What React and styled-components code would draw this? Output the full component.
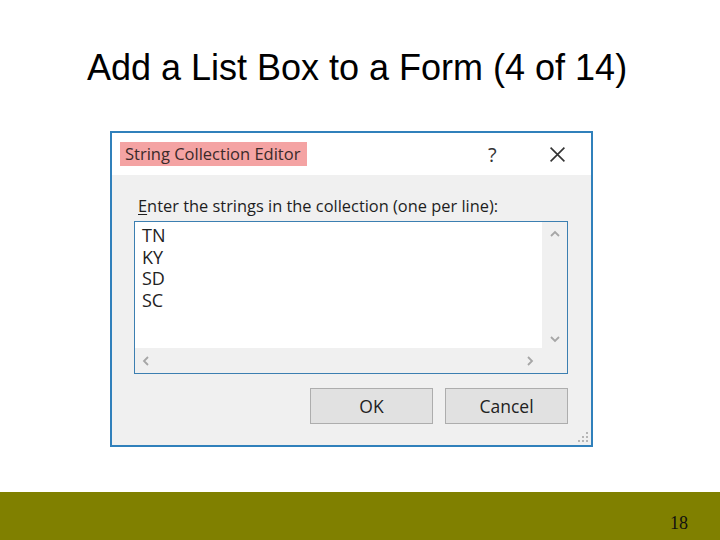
import React from "react";
import styled, { createGlobalStyle } from "styled-components";

const GlobalStyle = createGlobalStyle`
  html, body {
    margin: 0;
    padding: 0;
    background: #ffffff;
  }
  #root {
    width: 720px;
    height: 540px;
  }
`;

const Slide = styled.div`
  width: 720px;
  height: 540px;
  display: flex;
  flex-direction: column;
  background: #ffffff;
  overflow: hidden;
`;

const Heading = styled.h1`
  margin: 0;
  height: 131px;
  padding: 47px 6px 0 0;
  box-sizing: border-box;
  text-align: center;
  font-family: "Liberation Sans", Arial, sans-serif;
  font-size: 36px;
  font-weight: 400;
  line-height: 41px;
  color: #000;
`;

const Dialog = styled.div`
  margin-left: 110px;
  width: 483px;
  height: 316px;
  box-sizing: border-box;
  border: 2px solid #3080bb;
  display: flex;
  flex-direction: column;
  font-family: "Open Sans", "Noto Sans", sans-serif;
  color: #1a1a1a;
`;

const TitleBar = styled.div`
  height: 42px;
  background: #ffffff;
  display: flex;
  align-items: center;
  padding: 0 0 0 8px;
`;

const TitleText = styled.span`
  background: #f4a3a3;
  height: 24px;
  line-height: 24px;
  padding: 0 7px 0 5px;
  font-size: 16.5px;
  color: #3b2a2a;
`;

const TitleButton = styled.span`
  width: ${({ w }) => w}px;
  margin-left: ${({ gap }) => gap}px;
  display: flex;
  align-items: center;
  justify-content: center;
  color: #333;
  font-size: 20px;
`;

const Body = styled.div`
  flex: 1;
  background: #f0f0f0;
  position: relative;
  padding: 20px 23px 0 22px;
  display: flex;
  flex-direction: column;
`;

const Label = styled.div`
  font-size: 16.4px;
  line-height: 21px;
  margin-left: 4px;
  color: #1e1e1e;
  white-space: nowrap;
  u {
    text-decoration: underline;
    text-underline-offset: 2px;
  }
`;

const TextBox = styled.div`
  margin-top: 5px;
  width: 434px;
  height: 153px;
  box-sizing: border-box;
  border: 1px solid #3c7fb1;
  display: grid;
  grid-template-columns: 1fr 25px;
  grid-template-rows: 1fr 25px;
  background: #f0f0f0;
`;

const Lines = styled.div`
  background: #ffffff;
  padding: 3px 0 0 7px;
  font-size: 18px;
  line-height: 21.7px;
  color: #222;
`;

const ScrollV = styled.div`
  display: flex;
  flex-direction: column;
  justify-content: space-between;
  align-items: center;
  padding: 8px 0 5px;
`;

const ScrollH = styled.div`
  display: flex;
  justify-content: space-between;
  align-items: center;
  padding: 0 8px 0 7px;
`;

const Buttons = styled.div`
  margin-top: 14px;
  width: 434px;
  display: flex;
  justify-content: flex-end;
  gap: 12px;
`;

const Button = styled.div`
  width: 123px;
  height: 36px;
  box-sizing: border-box;
  background: #e1e1e1;
  border: 1px solid #adadad;
  display: flex;
  align-items: center;
  justify-content: center;
  font-size: 17.5px;
  color: #222;
`;

const Grip = styled.svg`
  position: absolute;
  right: 3px;
  bottom: 3px;
`;

const Footer = styled.div`
  margin-top: auto;
  height: 48px;
  background: #808000;
  display: flex;
  justify-content: flex-end;
  align-items: flex-start;
  padding: 22px 32px 0 0;
  box-sizing: border-box;
  font-family: "Liberation Serif", "Times New Roman", serif;
  font-size: 18px;
  line-height: 18px;
  color: #111;
`;

const Chevron = ({ dir }) => {
  const paths = {
    up: "M1 6 L5 2 L9 6",
    down: "M1 2 L5 6 L9 2",
    left: "M6 1 L2 5 L6 9",
    right: "M2 1 L6 5 L2 9",
  };
  const vertical = dir === "up" || dir === "down";
  return (
    <svg width={vertical ? 10 : 8} height={vertical ? 8 : 10} viewBox={vertical ? "0 0 10 8" : "0 0 8 10"}>
      <path d={paths[dir]} fill="none" stroke="#a6a6a6" strokeWidth="1.8" />
    </svg>
  );
};

const App = () => {
  const items = ["TN", "KY", "SD", "SC"];
  return (
    <>
      <GlobalStyle />
      <Slide>
        <Heading>Add a List Box to a Form (4 of 14)</Heading>
        <Dialog>
          <TitleBar>
            <TitleText>String Collection Editor</TitleText>
            <TitleButton w={20} gap={175}>?</TitleButton>
            <TitleButton w={20} gap={45}>
              <svg width="17" height="17" viewBox="0 0 16 16">
                <path d="M1.5 1.5 L14.5 14.5 M14.5 1.5 L1.5 14.5" stroke="#333" strokeWidth="1.5" />
              </svg>
            </TitleButton>
          </TitleBar>
          <Body>
            <Label>
              <u>E</u>nter the strings in the collection (one per line):
            </Label>
            <TextBox>
              <Lines>
                {items.map((s) => (
                  <div key={s}>{s}</div>
                ))}
              </Lines>
              <ScrollV>
                <Chevron dir="up" />
                <Chevron dir="down" />
              </ScrollV>
              <ScrollH>
                <Chevron dir="left" />
                <Chevron dir="right" />
              </ScrollH>
              <div />
            </TextBox>
            <Buttons>
              <Button>OK</Button>
              <Button>Cancel</Button>
            </Buttons>
            <Grip width="10" height="10" viewBox="0 0 10 10">
              <g fill="#b5b5b5">
                <rect x="8" y="0" width="2" height="2" />
                <rect x="4" y="4" width="2" height="2" />
                <rect x="8" y="4" width="2" height="2" />
                <rect x="0" y="8" width="2" height="2" />
                <rect x="4" y="8" width="2" height="2" />
                <rect x="8" y="8" width="2" height="2" />
              </g>
            </Grip>
          </Body>
        </Dialog>
        <Footer>18</Footer>
      </Slide>
    </>
  );
};

export default App;
